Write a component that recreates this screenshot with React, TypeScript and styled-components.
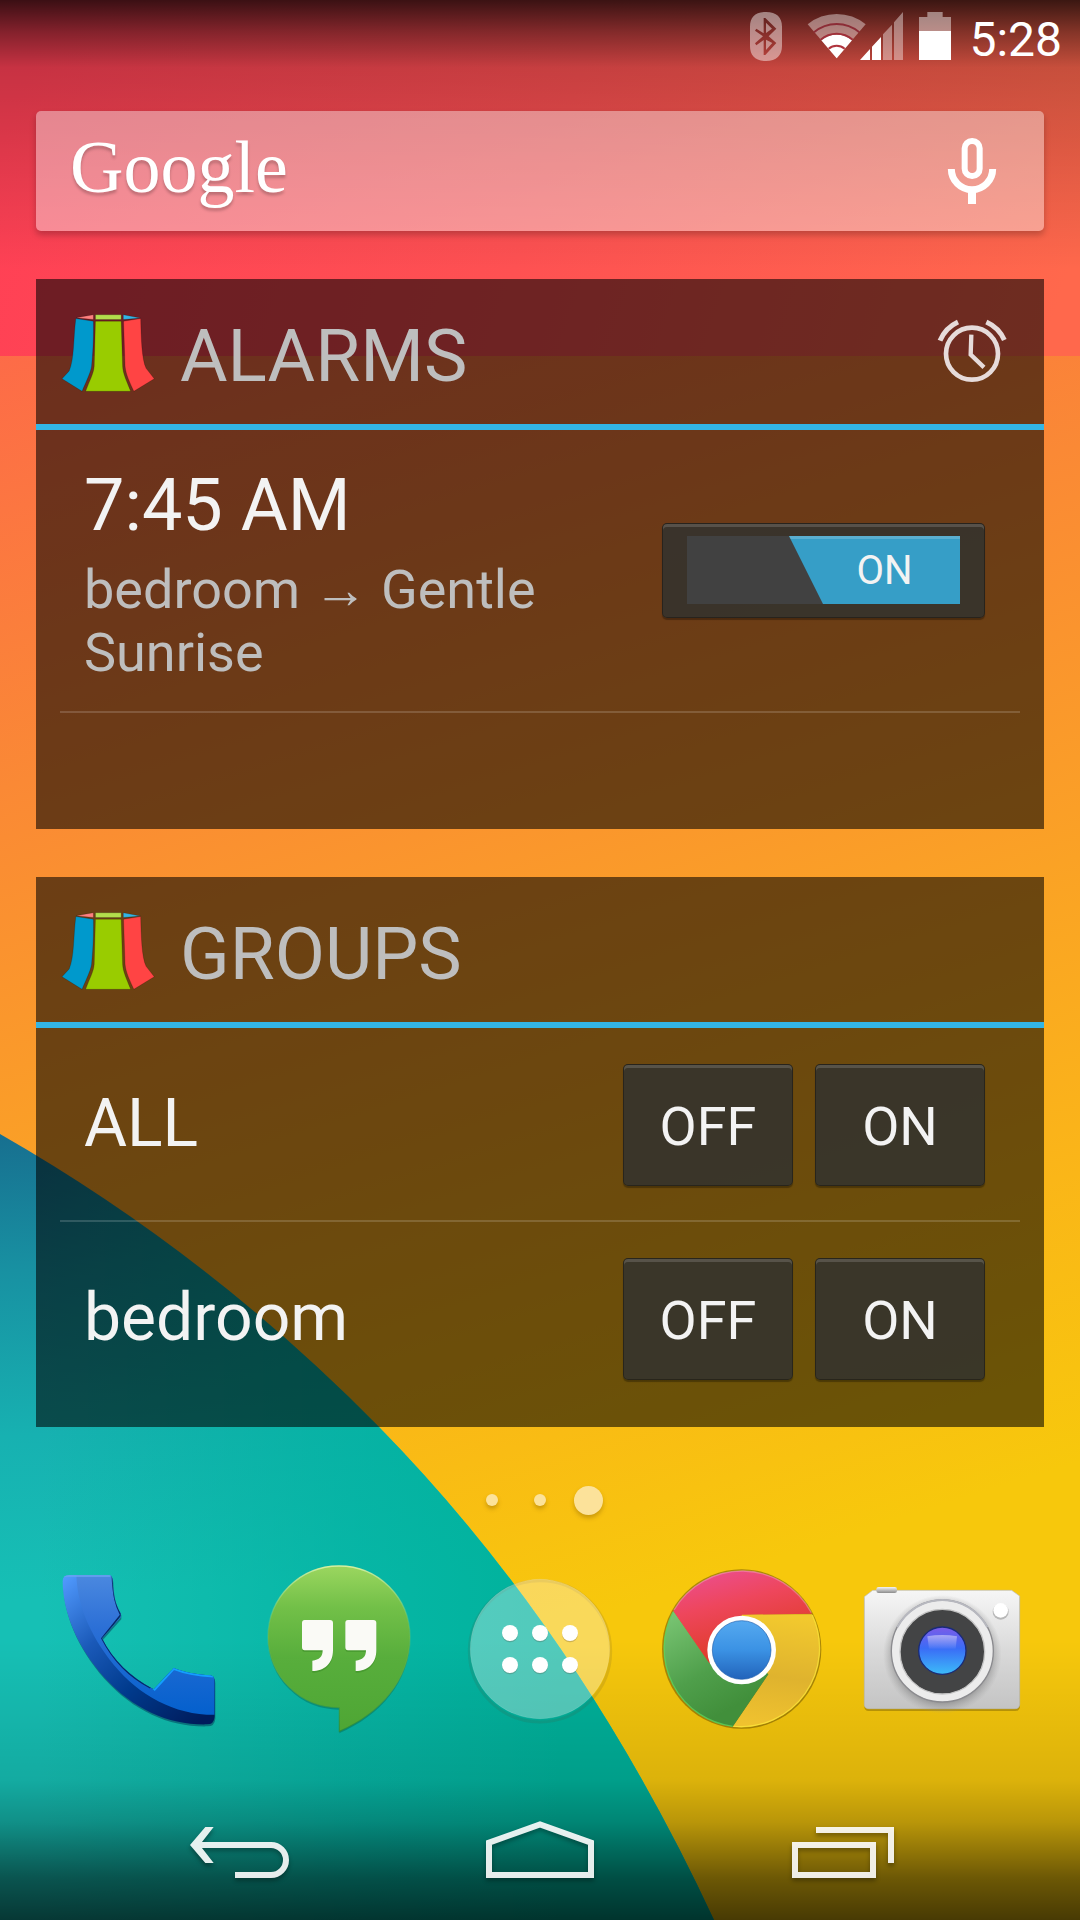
import React, { useState } from "react";
import styled, { createGlobalStyle } from "styled-components";

const GlobalStyle = createGlobalStyle`
  *, *::before, *::after { box-sizing: border-box; }
  body {
    margin: 0;
    background: #f8c40f;
    font-family: Roboto, "Noto Sans", sans-serif;
  }
  button { font: inherit; color: inherit; cursor: pointer; }
`;

const Screen = styled.div`
  position: relative;
  isolation: isolate;
  display: flex;
  flex-direction: column;
  min-height: 100vh;
  color: #f3f3f3;
`;

const WallpaperArt = styled.svg`
  position: absolute;
  inset: 0;
  z-index: -1;
  width: 100%;
  height: 100%;
`;

const StatusBar = styled.header`
  display: flex;
  justify-content: flex-end;
  align-items: flex-start;
  height: 75px;
  padding: 12px 18px 0 0;
`;

const StatusIcon = styled.svg<{ $width: number; $gap: number }>`
  width: ${(p) => p.$width}px;
  height: 50px;
  margin-right: ${(p) => p.$gap}px;
`;

const Clock = styled.time`
  font-size: 48px;
  line-height: 56px;
  color: #fff;
`;

const Workspace = styled.main`
  display: flex;
  flex-direction: column;
  gap: 48px;
  padding: 36px 36px 0;
`;

const SearchBar = styled.div`
  display: flex;
  align-items: center;
  height: 120px;
  padding: 0 24px 0 34px;
  border-radius: 5px;
  background: rgba(255, 255, 255, 0.4);
  box-shadow: 0 4px 6px rgba(0, 0, 0, 0.22);
`;

const SearchButton = styled.button`
  flex: 1;
  padding: 0 0 8px;
  border: 0;
  background: none;
  text-align: left;
  font-family: "Liberation Serif", serif;
  font-size: 74px;
  line-height: 84px;
  color: #fff;
  text-shadow: 0 3px 3px rgba(0, 0, 0, 0.22);
`;

const IconButton = styled.button`
  display: flex;
  padding: 0;
  border: 0;
  background: none;
`;

const Icon96 = styled.svg`
  display: block;
  width: 96px;
  height: 96px;
`;

const Card = styled.section`
  min-height: 550px;
  background: rgba(0, 0, 0, 0.57);
`;

const CardHeader = styled.header`
  display: flex;
  align-items: center;
  gap: 24px;
  height: 151px;
  padding: 0 24px;
  border-bottom: 6px solid #33b5e5;
`;

const CardTitle = styled.h2`
  flex: 1;
  margin: 0;
  padding-top: 8px;
  font-size: 73px;
  line-height: 84px;
  font-weight: 400;
  color: #bebebe;
`;

const Rows = styled.ul`
  margin: 0;
  padding: 0 24px;
  list-style: none;
`;

const Row = styled.li<{ $divided?: boolean }>`
  display: flex;
  align-items: center;
  gap: 22px;
  padding: 36px 35px 34px 24px;
  border-bottom: 2px solid ${(p) => (p.$divided ? "rgba(255, 255, 255, 0.16)" : "transparent")};
`;

const AlarmText = styled.div`
  flex: 1;
  display: flex;
  flex-direction: column;
  gap: 10px;
  margin: -2px 0 -7px;
`;

const AlarmTime = styled.span`
  font-size: 72px;
  line-height: 84px;
`;

const AlarmTarget = styled.span`
  font-size: 54px;
  line-height: 63px;
  color: #bebebe;
`;

const GroupName = styled.span`
  flex: 1;
  font-size: 66px;
  line-height: 78px;
  padding-bottom: 3px;
`;

const keyFace = `
  border: 1px solid rgba(0, 0, 0, 0.3);
  border-radius: 5px;
  background: rgba(51, 51, 46, 0.87);
  box-shadow: inset 0 3px 0 rgba(255, 255, 255, 0.15), 0 2px 1px rgba(0, 0, 0, 0.3);
`;

const KeyButton = styled.button`
  ${keyFace}
  width: 170px;
  height: 122px;
  padding: 2px 0 0;
  font-size: 54px;
  line-height: 63px;
`;

const SwitchFrame = styled.label`
  ${keyFace}
  position: relative;
  display: flex;
  width: 323px;
  height: 95px;
  margin: -2px 0 0;
  padding: 12px 24px;
`;

const SwitchInput = styled.input`
  position: absolute;
  inset: 0;
  width: 100%;
  height: 100%;
  margin: 0;
  opacity: 0;
  cursor: pointer;
`;

const SwitchTrack = styled.span<{ $on: boolean }>`
  display: flex;
  flex: 1;
  height: 68px;
  justify-content: ${(p) => (p.$on ? "flex-end" : "flex-start")};
  background: #414141;
`;

const SwitchThumb = styled.span<{ $on: boolean }>`
  width: 171px;
  padding-left: ${(p) => (p.$on ? "20px" : "0")};
  text-align: center;
  font-size: 40px;
  line-height: 69px;
  background: ${(p) => (p.$on ? "#369ec7" : "#666")};
  box-shadow: inset 0 3px 0 rgba(255, 255, 255, 0.18);
  clip-path: ${(p) =>
    p.$on
      ? "polygon(0 0, 100% 0, 100% 100%, 34px 100%)"
      : "polygon(0 0, calc(100% - 34px) 0, 100% 100%, 0 100%)"};
`;

const Pager = styled.nav`
  display: flex;
  justify-content: center;
  height: 50px;
  margin-top: 48px;
`;

const PageButton = styled.button<{ $current?: boolean }>`
  display: flex;
  align-items: center;
  justify-content: center;
  width: 48px;
  padding: 0;
  border: 0;
  background: none;

  &::before {
    content: "";
    width: ${(p) => (p.$current ? 29 : 12)}px;
    height: ${(p) => (p.$current ? 29 : 12)}px;
    border-radius: 50%;
    background: #fce29a;
    box-shadow: 0 3px 4px rgba(120, 80, 0, 0.35);
  }
`;

const Dock = styled.nav`
  flex: 1;
  display: grid;
  grid-template-columns: repeat(5, 1fr);
  align-items: center;
  justify-items: center;
  padding: 0 36px 4px;
`;

const DockIcon = styled.svg`
  display: block;
  width: 180px;
  height: 180px;
  overflow: visible;
`;

const NavBar = styled.footer`
  display: grid;
  grid-template-columns: repeat(3, 1fr);
  align-items: center;
  justify-items: center;
  height: 144px;
  padding: 0 90px;
`;

const NavIcon = styled.svg`
  display: block;
  width: 120px;
  height: 120px;
  fill: none;
  stroke: rgba(255, 255, 255, 0.9);
  stroke-width: 18;
  filter: drop-shadow(0 3px 2px rgba(0, 0, 0, 0.35));
`;

const TEAL = "M0 1134Q208 1253 379 1427Q580 1632 714 1920H0Z";

function Wallpaper() {
  return (
    <WallpaperArt viewBox="0 0 1080 1920" preserveAspectRatio="none" aria-hidden="true">
      <defs>
        <linearGradient id="wpRed" gradientUnits="userSpaceOnUse" x1="0" y1="150" x2="1000" y2="480">
          <stop offset="0" stopColor="#ff4055" />
          <stop offset="0.5" stopColor="#fe5152" />
          <stop offset="1" stopColor="#ff684c" />
        </linearGradient>
        <linearGradient id="wpOrange" gradientUnits="userSpaceOnUse" x1="100" y1="320" x2="520" y2="1640">
          <stop offset="0" stopColor="#fd6b48" />
          <stop offset="0.3" stopColor="#fa8935" />
          <stop offset="0.55" stopColor="#fa9f27" />
          <stop offset="0.8" stopColor="#fab618" />
          <stop offset="1" stopColor="#f7c80c" />
        </linearGradient>
        <linearGradient id="wpTeal" gradientUnits="userSpaceOnUse" x1="0" y1="1130" x2="30" y2="1600">
          <stop offset="0" stopColor="#176e8f" />
          <stop offset="0.3" stopColor="#1891a2" />
          <stop offset="0.65" stopColor="#17b1b1" />
          <stop offset="1" stopColor="#16c0b5" />
        </linearGradient>
        <linearGradient id="wpTealSide" gradientUnits="userSpaceOnUse" x1="40" y1="1500" x2="560" y2="1500">
          <stop offset="0" stopColor="#00b39a" stopOpacity="0" />
          <stop offset="0.6" stopColor="#00b29f" stopOpacity="0.7" />
          <stop offset="1" stopColor="#00b29b" stopOpacity="1" />
        </linearGradient>
        <linearGradient id="wpTop" gradientUnits="userSpaceOnUse" x1="0" y1="0" x2="0" y2="270">
          <stop offset="0" stopColor="#000" stopOpacity="0.77" />
          <stop offset="0.12" stopColor="#000" stopOpacity="0.48" />
          <stop offset="0.25" stopColor="#000" stopOpacity="0.22" />
          <stop offset="0.42" stopColor="#000" stopOpacity="0.17" />
          <stop offset="1" stopColor="#000" stopOpacity="0" />
        </linearGradient>
        <linearGradient id="wpBottom" gradientUnits="userSpaceOnUse" x1="0" y1="1640" x2="0" y2="1920">
          <stop offset="0" stopColor="#000" stopOpacity="0" />
          <stop offset="0.5" stopColor="#000" stopOpacity="0.11" />
          <stop offset="0.65" stopColor="#000" stopOpacity="0.25" />
          <stop offset="0.85" stopColor="#000" stopOpacity="0.56" />
          <stop offset="1" stopColor="#000" stopOpacity="0.71" />
        </linearGradient>
      </defs>
      <rect width="1080" height="357" fill="url(#wpRed)" />
      <rect y="356" width="1080" height="1564" fill="url(#wpOrange)" />
      <path d={TEAL} fill="url(#wpTeal)" />
      <path d={TEAL} fill="url(#wpTealSide)" />
      <rect width="1080" height="270" fill="url(#wpTop)" />
      <rect y="1640" width="1080" height="280" fill="url(#wpBottom)" />
    </WallpaperArt>
  );
}

function StatusIcons() {
  return (
    <>
      <StatusIcon $width={32} $gap={25} viewBox="90 36 96 150" role="img" aria-label="Bluetooth on">
        <path
          fill="#fff"
          fillOpacity="0.45"
          fillRule="evenodd"
          d="M138 36c32 0 48 16 48 44v58c0 28-16 45-48 45s-48-17-48-45V80c0-28 16-44 48-44Z M131 54V100L109 86L105 92L129 109L105 130L109 136L131 120V165H136L169 129L146 109L169 86L136 54Z M138 68V99L156 86Z M138 119V150L157 129Z"
        />
      </StatusIcon>
      <StatusIcon $width={98} $gap={14} viewBox="261 36 294 150" role="img" aria-label="Wi-Fi and signal">
        <g fill="none" stroke="#fff">
          <path d="M350 175L263 73A137 137 0 0 1 437 73Z" fill="#fff" fillOpacity="0.4" stroke="none" />
          <path d="M350 175L304 121A71 71 0 0 1 396 121Z" fill="#fff" stroke="none" />
          <path d="M282 97A105 105 0 0 1 418 97" stroke="#8c2c36" strokeWidth="6" />
          <path d="M302 119A74 74 0 0 1 398 119" stroke="#a0303a" strokeWidth="6" />
          <path d="M326 146A37 37 0 0 1 374 146" stroke="#b0343e" strokeWidth="6" />
        </g>
        <path d="M420 180L450 147V180ZM456 180V140L483 111V180Z" fill="#fff" />
        <path d="M489 180V103L516 74V180ZM522 180V67L549 36V180Z" fill="#fff" fillOpacity="0.4" />
      </StatusIcon>
      <StatusIcon $width={32} $gap={18} viewBox="597 36 96 150" role="img" aria-label="Battery 65%">
        <path d="M597 94V51H622V36H668V51H693V94Z" fill="#fff" fillOpacity="0.45" />
        <path d="M597 93H693V180H597Z" fill="#fff" />
      </StatusIcon>
    </>
  );
}

function MicIcon() {
  return (
    <Icon96 viewBox="612 369 288 288" fill="none" stroke="#fff" aria-hidden="true">
      <rect x="734" y="423" width="45" height="105" rx="22" strokeWidth="18" />
      <path d="M694 507A62 62 0 0 0 818 507" strokeWidth="21" />
      <path d="M756 572V612" strokeWidth="24" />
    </Icon96>
  );
}

function LampLogo() {
  return (
    <Icon96 viewBox="1 1 94 94" stroke="rgba(0,0,0,.35)" strokeWidth="0.5" aria-hidden="true">
      <path fill="#ff7f7f" d="M16.8 14.4L33.7 11.5V16.2Z" />
      <path fill="#b2dd4c" d="M35.7 11.5H60.9V16.2H35.7Z" />
      <path fill="#33b5e5" d="M63 11.5L79.8 14.8L63 16.2Z" />
      <path fill="#0099cc" d="M16.5 15.2L33.7 17.8C34 38 33 50 31.9 62C31 68 27 76 22.6 86.5L3 74.2L10 66.5C15 55 14 35 16.5 15.2Z" />
      <path fill="#99cc00" d="M35.7 17.8H60.9L62.3 62C62.6 69 66 76 70.2 86.5H26.1C30 76 34 69 34.5 62Z" />
      <path fill="#ff4444" d="M63.2 17.8L80 15.2C80.5 35 81 55 85.3 64L93.3 74.2L73.3 86.5C69 77 65.5 70 64.7 62Z" />
    </Icon96>
  );
}

function AlarmIcon() {
  return (
    <Icon96 viewBox="912 133 288 288" fill="none" stroke="#e6dbda" aria-hidden="true">
      <circle cx="1056" cy="282" r="78" strokeWidth="14" />
      <path d="M1054 225L1052 285L1092 323" strokeWidth="13" />
      <path d="M960 243A106 106 0 0 1 1014 187" strokeWidth="15" />
      <path d="M1099 187A106 106 0 0 1 1153 241" strokeWidth="15" />
    </Icon96>
  );
}

function PhoneIcon() {
  const body =
    "M97 124Q97 105 117 105H236Q246 105 247 122C249 165 254 190 271 220V232L215 295C248 360 300 412 370 448L430 384C460 396 500 404 540 406Q553 408 553 424V530Q551 553 530 553C420 556 310 510 220 410C140 320 97 215 97 124Z";
  return (
    <DockIcon viewBox="50 57 540 540" aria-hidden="true">
      <defs>
        <linearGradient id="phFace" x1="0" y1="0" x2="0" y2="1">
          <stop offset="0" stopColor="#4d8ae0" />
          <stop offset="0.4" stopColor="#2b6fd6" />
          <stop offset="1" stopColor="#0460cd" />
        </linearGradient>
        <linearGradient id="phSide" gradientUnits="userSpaceOnUse" x1="110" y1="100" x2="500" y2="550">
          <stop offset="0" stopColor="#529bff" />
          <stop offset="0.35" stopColor="#1a59b8" />
          <stop offset="0.65" stopColor="#003a8c" />
          <stop offset="1" stopColor="#001c5c" />
        </linearGradient>
        <clipPath id="phClip">
          <path d={body} />
        </clipPath>
      </defs>
      <path d={body} fill="#003" opacity="0.35" transform="translate(2 6)" />
      <path d={body} fill="url(#phSide)" />
      <g clipPath="url(#phClip)">
        <path
          d="M138 95H260L290 232L220 296C250 360 300 408 370 448L430 380L570 400V524C440 530 330 470 250 374C170 275 138 180 138 95Z"
          fill="url(#phFace)"
        />
        <path d="M370 450L430 385C460 397 500 405 550 408" fill="none" stroke="#13a0ff" strokeWidth="9" />
        <path d="M246 105C249 170 256 195 271 225L215 295C248 360 300 412 360 443" fill="none" stroke="#062a66" strokeWidth="5" />
        <path d="M100 108H240" stroke="#6aa5f2" strokeWidth="5" />
      </g>
    </DockIcon>
  );
}

function HangoutsIcon() {
  const bubble = "M927 78A213 213 0 0 1 1140 291C1140 420 1050 520 928 574V503A213 213 0 0 1 714 291A213 213 0 0 1 927 78Z";
  return (
    <DockIcon viewBox="654 57 540 540" aria-hidden="true">
      <defs>
        <linearGradient id="hoFace" x1="0" y1="0" x2="0" y2="1">
          <stop offset="0" stopColor="#9bd65f" />
          <stop offset="0.25" stopColor="#72c048" />
          <stop offset="0.55" stopColor="#58ae3c" />
          <stop offset="1" stopColor="#4ea634" />
        </linearGradient>
        <linearGradient id="hoRim" x1="0" y1="0" x2="0" y2="1">
          <stop offset="0" stopColor="#d6f0a0" />
          <stop offset="0.35" stopColor="#8fd060" stopOpacity="0.3" />
          <stop offset="1" stopColor="#2f8a2a" stopOpacity="0.6" />
        </linearGradient>
      </defs>
      <path d={bubble} fill="#043" opacity="0.3" transform="translate(0 6)" />
      <path d={bubble} fill="url(#hoFace)" stroke="url(#hoRim)" strokeWidth="4" />
      <g fill="#2d7a1c" opacity="0.35" transform="translate(0 5)">
        <path d="M824 240H900Q909 240 909 249V330C909 372 882 393 847 393V362C868 360 878 350 878 331H824Q816 331 816 322V249Q816 240 824 240Z" />
        <path d="M954 240H1030Q1039 240 1039 249V330C1039 372 1012 393 977 393V362C998 360 1008 350 1008 331H954Q946 331 946 322V249Q946 240 954 240Z" />
      </g>
      <g fill="#fafaf6">
        <path d="M824 240H900Q909 240 909 249V330C909 372 882 393 847 393V362C868 360 878 350 878 331H824Q816 331 816 322V249Q816 240 824 240Z" />
        <path d="M954 240H1030Q1039 240 1039 249V330C1039 372 1012 393 977 393V362C998 360 1008 350 1008 331H954Q946 331 946 322V249Q946 240 954 240Z" />
      </g>
    </DockIcon>
  );
}

function AppsIcon() {
  const dots = [519, 615].flatMap((y) => [210, 300, 390].map((x) => ({ x, y })));
  return (
    <DockIcon viewBox="30 297 540 540" aria-hidden="true">
      <circle cx="300" cy="574" r="212" fill="none" stroke="#543" strokeOpacity="0.14" strokeWidth="9" />
      <circle cx="300" cy="567" r="209" fill="#fff" fillOpacity="0.32" stroke="#fff" strokeOpacity="0.14" strokeWidth="3" />
      {dots.map((d) => (
        <g key={`${d.x}-${d.y}`}>
          <circle cx={d.x} cy={d.y + 4} r="24" fill="#543" fillOpacity="0.25" />
          <circle cx={d.x} cy={d.y} r="24" fill="#fff" />
        </g>
      ))}
    </DockIcon>
  );
}

function ChromeIcon() {
  return (
    <DockIcon viewBox="636 299 540 540" aria-hidden="true">
      <defs>
        <linearGradient id="crRed" gradientUnits="userSpaceOnUse" x1="860" y1="330" x2="930" y2="600">
          <stop offset="0" stopColor="#ec4d88" />
          <stop offset="0.35" stopColor="#ee465c" />
          <stop offset="1" stopColor="#dc3a20" />
        </linearGradient>
        <linearGradient id="crGreen" gradientUnits="userSpaceOnUse" x1="690" y1="470" x2="850" y2="760">
          <stop offset="0" stopColor="#78c472" />
          <stop offset="0.6" stopColor="#4f9f4b" />
          <stop offset="1" stopColor="#418f3b" />
        </linearGradient>
        <linearGradient id="crYellow" gradientUnits="userSpaceOnUse" x1="1000" y1="465" x2="960" y2="800">
          <stop offset="0" stopColor="#f2c92e" />
          <stop offset="0.55" stopColor="#dfb32e" />
          <stop offset="1" stopColor="#f0c22f" />
        </linearGradient>
        <linearGradient id="crBlue" x1="0" y1="0" x2="0" y2="1">
          <stop offset="0" stopColor="#55a9f0" />
          <stop offset="0.5" stopColor="#3b92e4" />
          <stop offset="1" stopColor="#2263ba" />
        </linearGradient>
      </defs>
      <circle cx="905" cy="569" r="239" fill="#6b5000" opacity="0.55" />
      <path d="M905 571V465H1116A236 236 0 0 1 878 802L985 645Z" fill="url(#crYellow)" />
      <path d="M700 455L808 610L905 571L985 645L878 802A236 236 0 0 1 700 455Z" fill="url(#crGreen)" />
      <path d="M700 455A236 236 0 0 1 1116 463L905 466V571L808 612Z" fill="url(#crRed)" />
      <path d="M702 452A236 236 0 0 1 1114 460" fill="none" stroke="#f7b6cc" strokeOpacity="0.4" strokeWidth="4" />
      <path d="M699 458A236 236 0 0 0 878 801" fill="none" stroke="#5fd25a" strokeOpacity="0.8" strokeWidth="4" />
      <path d="M880 801A236 236 0 0 0 1117 467" fill="none" stroke="#ffe93c" strokeOpacity="0.7" strokeWidth="4" />
      <circle cx="905" cy="572" r="103" fill="#fff" />
      <circle cx="905" cy="572" r="88" fill="url(#crBlue)" stroke="#1f5fae" strokeWidth="2" />
    </DockIcon>
  );
}

function CameraIcon() {
  return (
    <DockIcon viewBox="99 57 540 540" aria-hidden="true">
      <defs>
        <linearGradient id="cmBody" x1="0" y1="0" x2="0" y2="1">
          <stop offset="0" stopColor="#f6f6f6" />
          <stop offset="0.5" stopColor="#dadada" />
          <stop offset="1" stopColor="#c4c4c4" />
        </linearGradient>
        <linearGradient id="cmKey" x1="0" y1="0" x2="0" y2="1">
          <stop offset="0" stopColor="#f4f4f4" />
          <stop offset="1" stopColor="#8c8c8c" />
        </linearGradient>
        <linearGradient id="cmLens" x1="0" y1="0" x2="0" y2="1">
          <stop offset="0" stopColor="#7c5ce8" />
          <stop offset="0.45" stopColor="#3a6cf6" />
          <stop offset="1" stopColor="#3cbcf8" />
        </linearGradient>
        <linearGradient id="cmGlint" x1="0" y1="0" x2="0" y2="1">
          <stop offset="0" stopColor="#fff" stopOpacity="0.45" />
          <stop offset="1" stopColor="#fff" stopOpacity="0.05" />
        </linearGradient>
        <radialGradient id="cmShade">
          <stop offset="0.8" stopColor="#777" stopOpacity="0.6" />
          <stop offset="1" stopColor="#999" stopOpacity="0" />
        </radialGradient>
      </defs>
      <path d="M160 154H575L600 172V500Q598 513 586 513H146Q133 512 133 500V174Z" fill="#6a5200" opacity="0.4" />
      <path d="M158 151H575L599 168V493Q598 506 586 506H146Q133 506 133 493V170Z" fill="url(#cmBody)" stroke="#bdbdbd" strokeWidth="2" />
      <rect x="169" y="141" width="62" height="18" rx="7" fill="url(#cmKey)" />
      <circle cx="367" cy="343" r="178" fill="url(#cmShade)" />
      <circle cx="367" cy="333" r="153" fill="#ececec" stroke="#8b8b8f" strokeWidth="4" />
      <path d="M232 262A152 152 0 0 1 502 262" fill="none" stroke="#b7b8bf" strokeWidth="6" />
      <circle cx="367" cy="335" r="127" fill="#434445" stroke="#c4c4c4" strokeWidth="4" />
      <circle cx="367" cy="332" r="71" fill="url(#cmLens)" stroke="#1a2b78" strokeWidth="4" />
      <path d="M322 289Q367 281 411 289L407 326H327Z" fill="url(#cmGlint)" />
      <circle cx="542" cy="215" r="24" fill="#888" opacity="0.5" />
      <circle cx="542" cy="211" r="22" fill="#fff" />
    </DockIcon>
  );
}

const DOCK_APPS = [
  { name: "Phone", Icon: PhoneIcon },
  { name: "Hangouts", Icon: HangoutsIcon },
  { name: "All apps", Icon: AppsIcon },
  { name: "Chrome", Icon: ChromeIcon },
  { name: "Camera", Icon: CameraIcon },
];

const GROUPS = ["ALL", "bedroom"];

export default function App() {
  const [alarmOn, setAlarmOn] = useState(true);

  return (
    <>
      <GlobalStyle />
      <Screen>
        <Wallpaper />
        <StatusBar>
          <StatusIcons />
          <Clock>5:28</Clock>
        </StatusBar>

        <Workspace>
          <SearchBar role="search">
            <SearchButton type="button">Google</SearchButton>
            <IconButton type="button" aria-label="Voice search">
              <MicIcon />
            </IconButton>
          </SearchBar>

          <Card>
            <CardHeader>
              <LampLogo />
              <CardTitle>ALARMS</CardTitle>
              <IconButton type="button" aria-label="Open alarms">
                <AlarmIcon />
              </IconButton>
            </CardHeader>
            <Rows>
              <Row $divided>
                <AlarmText>
                  <AlarmTime>7:45 AM</AlarmTime>
                  <AlarmTarget>bedroom → Gentle Sunrise</AlarmTarget>
                </AlarmText>
                <SwitchFrame>
                  <SwitchInput
                    type="checkbox"
                    role="switch"
                    aria-label="7:45 AM alarm"
                    checked={alarmOn}
                    onChange={(e) => setAlarmOn(e.target.checked)}
                  />
                  <SwitchTrack $on={alarmOn}>
                    <SwitchThumb $on={alarmOn}>{alarmOn ? "ON" : "OFF"}</SwitchThumb>
                  </SwitchTrack>
                </SwitchFrame>
              </Row>
            </Rows>
          </Card>

          <Card>
            <CardHeader>
              <LampLogo />
              <CardTitle>GROUPS</CardTitle>
            </CardHeader>
            <Rows>
              {GROUPS.map((name, i) => (
                <Row key={name} $divided={i < GROUPS.length - 1}>
                  <GroupName>{name}</GroupName>
                  <KeyButton type="button">OFF</KeyButton>
                  <KeyButton type="button">ON</KeyButton>
                </Row>
              ))}
            </Rows>
          </Card>
        </Workspace>

        <Pager aria-label="Home screens">
          <PageButton type="button" aria-label="Page 1" />
          <PageButton type="button" aria-label="Page 2" />
          <PageButton type="button" aria-label="Page 3" $current />
        </Pager>

        <Dock aria-label="Favourite apps">
          {DOCK_APPS.map(({ name, Icon }) => (
            <IconButton key={name} type="button" aria-label={name}>
              <Icon />
            </IconButton>
          ))}
        </Dock>

        <NavBar>
          <IconButton type="button" aria-label="Back">
            <NavIcon viewBox="90 24 360 360">
              <path d="M140 195H363A45 45 0 0 1 363 285H255" />
              <path d="M120 195L166 141H191L149 195L191 249H166Z" fill="#e6f1ef" stroke="none" />
            </NavIcon>
          </IconButton>
          <IconButton type="button" aria-label="Home">
            <NavIcon viewBox="990 24 360 360">
              <path d="M1017 285V188L1170 133L1323 188V285Z" />
            </NavIcon>
          </IconButton>
          <IconButton type="button" aria-label="Recent apps">
            <NavIcon viewBox="540 24 360 360">
              <path d="M585 195H819V285H585ZM648 150H873V249" />
            </NavIcon>
          </IconButton>
        </NavBar>
      </Screen>
    </>
  );
}
